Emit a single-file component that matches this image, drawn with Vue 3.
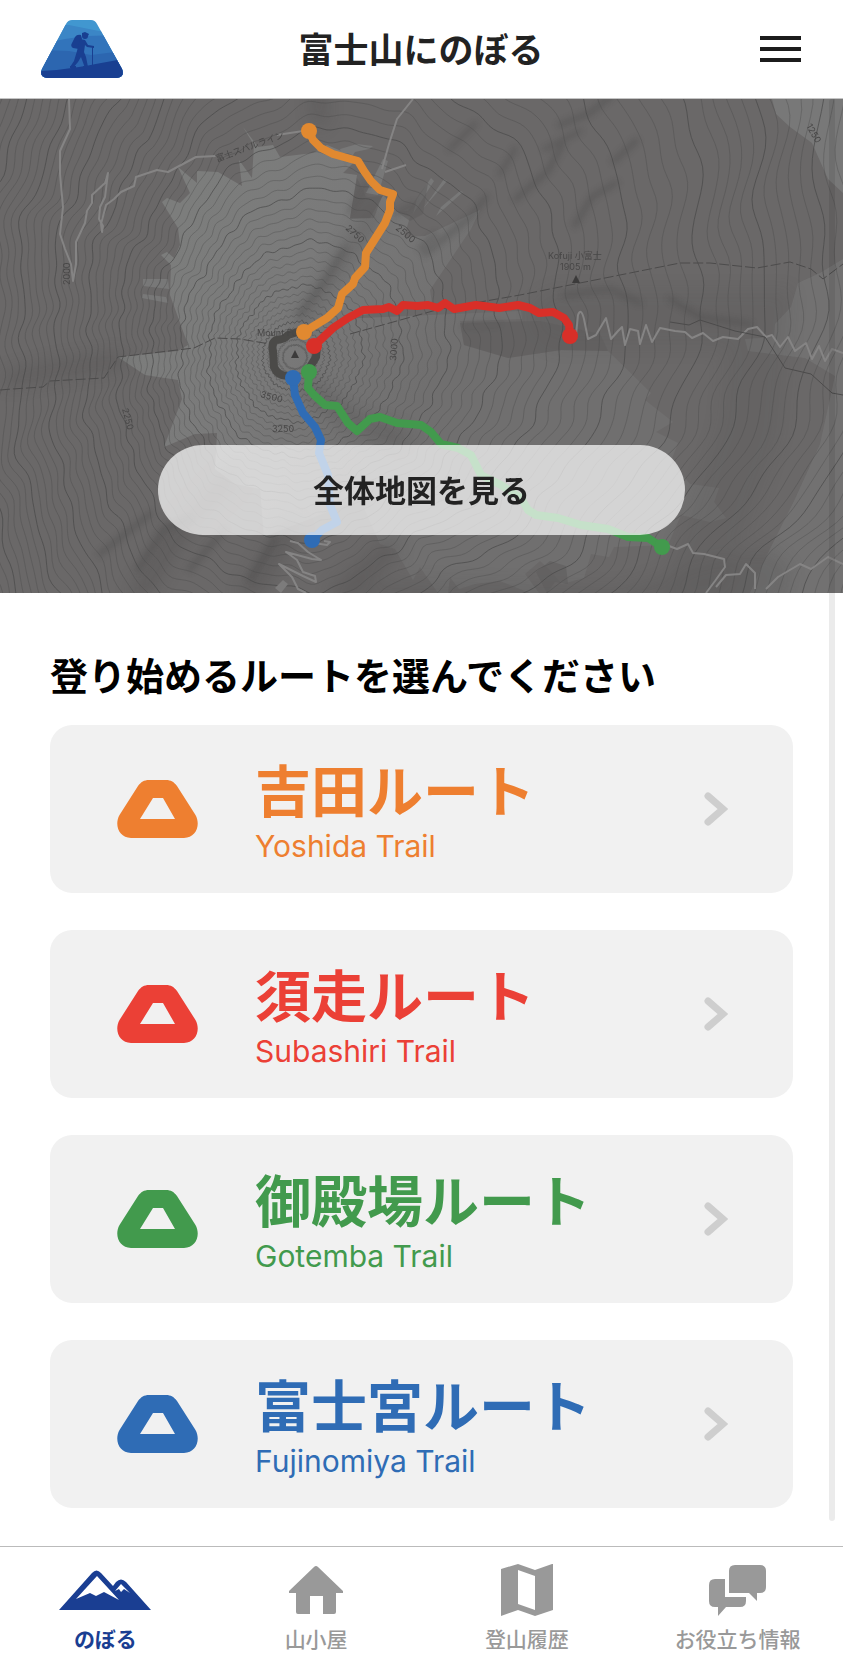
<script setup>
import { ref } from 'vue'

const routes = [
  { id: 'yoshida', name: '吉田ルート', trail: 'Yoshida Trail' },
  { id: 'subashiri', name: '須走ルート', trail: 'Subashiri Trail' },
  { id: 'gotemba', name: '御殿場ルート', trail: 'Gotemba Trail' },
  { id: 'fujinomiya', name: '富士宮ルート', trail: 'Fujinomiya Trail' },
]

const tabs = [
  { id: 'climb', label: 'のぼる' },
  { id: 'hut', label: '山小屋' },
  { id: 'history', label: '登山履歴' },
  { id: 'info', label: 'お役立ち情報' },
]

const activeTab = ref('climb')

const trails = [
  {
    id: 'yoshida',
    points: '309,32 313,41 321,49 333,55 358,62 364,72 371,82 380,91 393,95 390,103 390,111 385,124 373,143 366,154 365,168 355,179 353,185 342,195 338,209 327,219 304,233',
    ends: [[309, 32], [304, 233]],
  },
  {
    id: 'subashiri',
    points: '314,247 333,229 348,219 363,211 383,210 389,208 397,212 403,206 417,207 428,206 438,209 445,204 454,210 476,206 499,209 518,206 530,209 539,214 553,213 564,219 569,226 570,237',
    ends: [[314, 247], [570, 237]],
  },
  {
    id: 'gotemba',
    points: '309,273 308,289 314,296 325,306 337,307 348,324 357,332 370,320 380,318 397,324 421,326 431,333 441,345 458,349 471,356 481,376 501,386 521,399 528,411 536,416 558,419 581,426 608,430 628,438 648,439 662,448',
    ends: [[309, 273], [662, 448]],
  },
  {
    id: 'fujinomiya',
    points: '293,279 295,296 303,314 315,328 321,341 319,354 328,376 330,406 337,423 322,431 312,441',
    ends: [[293, 279], [312, 441]],
  },
]

// contour rings around the summit: steeper to the west, wider apart to the north-east
function contour(level) {
  const points = []
  const grow = Math.min(level, 40)
  for (let step = 0; step < 360; step++) {
    const a = (step / 360) * Math.PI * 2
    const east = Math.max(0, Math.cos(a + 0.6))
    const base = 12 + level * 5 + level * level * 0.022
    const spread = 1 + east * grow * 0.02 + Math.sin(a) ** 2 * grow * 0.011
    const ridge =
      Math.sin(a * 9 + 1) * 0.014 +
      Math.sin(a * 17 + level * 0.08) * 0.011 +
      Math.sin(a * 31 + level * 0.2) * 0.008
    const rough = Math.sin(a * 47 + level * 0.9) * 0.9
    const r = base * spread * (1 + ridge) + rough
    points.push(`${(295 + r * Math.cos(a)).toFixed(1)},${(258 + r * Math.sin(a)).toFixed(1)}`)
  }
  return points.join(' ')
}

const contours = Array.from({ length: 72 }, (_, i) => ({
  points: contour(i),
  major: i % 5 === 4,
}))
</script>

<template>
  <div class="app">
    <header class="header">
      <a class="logo" href="#" aria-label="ホーム">
        <svg width="82" height="58" viewBox="0 0 82 58" aria-hidden="true">
          <defs>
            <clipPath id="logo-shape">
              <path d="M31 0H50Q54 0 56 4L81 49Q84 57 76 58H6Q-2 57 1 49L25 4Q27 0 31 0Z" />
            </clipPath>
          </defs>
          <g clip-path="url(#logo-shape)">
            <path fill="#4197d0" d="M0 0h82v58H0z" />
            <path fill="#3b86c6" d="M0 4L28 5L58 11L82 8V58H0z" />
            <path fill="#3274bb" d="M0 24L24 19L45 16L82 15V58H0z" />
            <path fill="#2c66b0" d="M0 30L28 31L50 35L82 31V58H0z" />
            <path fill="#193f91" d="M0 51Q20 50 38 47Q55 44 82 39V58H0z" />
          </g>
          <g fill="#193f91">
            <circle cx="44" cy="16" r="3" />
            <path d="M41 13l3-1 4 2-1 2h-6z" />
            <path d="M34 17q2-3 6-2l1 4-3 10-6-1q-3-2-1-5z" />
            <path d="M39 19l5 1 3 5 6 1v2l-7-1-2-2-1 7 2 5 2 10-3 1-4-11-3 5-5 6-3-1 4-6 3-10z" />
            <path d="M29 46h6v2h-6zM42 46h5v2h-5zM51 26h1v20h-1z" />
          </g>
        </svg>
      </a>
      <h1 class="title">富士山にのぼる</h1>
      <button class="menu" type="button" aria-label="メニュー">
        <span></span>
        <span></span>
        <span></span>
      </button>
    </header>

    <main class="content">
      <section class="map">
        <svg class="map-canvas" viewBox="0 0 843 494" preserveAspectRatio="xMidYMid slice" aria-hidden="true">
          <defs>
            <linearGradient id="slope" gradientUnits="userSpaceOnUse" x1="180" y1="120" x2="440" y2="260">
              <stop offset="0" stop-color="#7c7d7c" />
              <stop offset="0.45" stop-color="#7a7a7a" />
              <stop offset="1" stop-color="#706f6f" />
            </linearGradient>
            <filter id="shade" x="-20%" y="-20%" width="140%" height="140%">
              <feGaussianBlur stdDeviation="9" />
            </filter>
            <filter id="shade-fine" x="-20%" y="-20%" width="140%" height="140%">
              <feGaussianBlur stdDeviation="3" />
            </filter>
          </defs>
          <rect width="843" height="494" fill="#6a6868" />

          <!-- bare slopes -->
          <path
            fill="url(#slope)"
            d="M188 246L170 196L171 166L161 156L167 153L174 159L180 146L178 129L162 103L167 99L180 104L190 94L178 68L197 84V72L218 73L242 87L239 61L252 79L254 46L243 28L258 48L273 46L280 58L313 54L327 46L358 59L343 74L357 76L350 119L370 119L384 95L396 112L410 118L404 138L425 137L480 111L471 130L430 191L432 204L340 220L521 212L522 220L460 222L464 246L508 259L561 251L608 252L651 294L645 301L673 323L656 333L678 344L671 362L690 385L719 389L714 403L726 419L710 423L681 416L668 446L614 448L609 458L591 455L584 479L562 485L549 470L540 462L525 475L539 494H530L500 482L475 485L459 490L450 478L448 494H438L420 468L413 481L395 450L380 445L360 400L264 438L260 390L235 385L215 370L217 334L195 335L164 348L182 300L178 281L145 276L118 258L178 252Z"
          />
          <g fill="#787878">
            <path d="M772 0H843V94L828 80L812 44L790 28L776 15Z" />
            <path d="M843 160L820 174L798 184L791 208L775 225L774 238L745 240L748 252L805 259L835 277L820 345L795 400L765 460L750 494H843Z" opacity="0.6" />
            <path d="M143 180H168L169 190L143 187ZM143 195L166 198L168 204L142 199Z" />
            <path d="M340 50L357 45L373 47L369 50L355 53L345 68ZM366 94L383 60L388 62L378 96ZM413 115L434 82L431 79L417 100ZM421 112L447 82L444 80L430 100ZM436 117L463 93L460 92L441 108Z" />
          </g>

          <!-- hillshade -->
          <g filter="url(#shade)" stroke="#444343" fill="none" stroke-linecap="round" opacity="0.3">
            <path stroke-width="14" d="M300 225L340 165L375 115M320 20L318 -10" />
            <path stroke-width="18" d="M310 290L350 320L400 340M140 494L180 430L230 380M250 494L290 430M340 494L390 450" />
            <path stroke-width="14" d="M10 280L60 270L120 262" />
            <path stroke-width="60" d="M360 510L620 520L760 480" opacity="0.6" />
            <path stroke-width="60" d="M560 220L760 220L750 330L700 470" opacity="0.4" />
          </g>
          <g filter="url(#shade-fine)" stroke="#403f3f" fill="none" stroke-linecap="round" opacity="0.3">
            <path stroke-width="6" d="M560 26L590 14L612 -4M614 62L636 42M516 100L548 72L562 46M575 126L592 98L616 84M425 155L470 118L486 98M300 215L325 182L345 150M138 470L164 430L190 420M190 470L225 430M250 480L275 440M100 455L150 415" />
            <path stroke-width="5" d="M565 196L610 190L640 204M670 200L700 218L750 225M450 50L475 25M545 50L580 32M500 75L515 50M350 112L366 85M395 115L415 105M465 228L500 226M420 150L435 135" />
          </g>
          <path
            fill="#5f5d5d"
            opacity="0.6"
            d="M357 79L366 98L382 97L374 119L350 120ZM396 112L408 112L420 94L428 84L423 115L410 122ZM460 224L540 222L600 235L608 252L561 251L508 259L464 246ZM536 473L550 462L566 467L568 485L555 483L547 494Z"
          />

          <g fill="none" stroke="#494848">
            <polygon
              v-for="(line, i) in contours"
              :key="i"
              :points="line.points"
              :class="line.major ? 'contour-major' : 'contour-minor'"
            />
          </g>

          <!-- roads -->
          <g class="road">
            <path d="M69 0L70 30L60 52L60 75L63 108L60 135L65 150L71 165L73 182L76 165L76 143L85 124L87 112L92 104L92 96L105 84L108 74L105 98L100 108L99 120L103 127L102 133L101 125L106 106L114 100L121 93L134 87L136 78L157 71L168 73L196 58L216 57M277 36L303 32" />
            <path d="M576 236L578 216Q581 208 584 220L588 240L596 236L606 219L611 240L618 232L622 228L625 246L630 230L638 232L640 245L646 226L652 243L660 229L675 232L685 233L692 239L703 234L713 242L723 238L738 240L748 230L757 228L766 238L772 236L780 248L788 238L795 252L806 244L812 260L819 247L825 262L832 250L843 254" />
            <path d="M669 447L677 450L688 445L693 454L704 455L724 460L725 468L715 482L706 494M716 488L726 476L740 475L746 465L755 474V490M766 490L778 478L800 465L811 470L828 458L843 465" />
            <path d="M413 0L397 20L389 45L382 70M385 73L406 66" />
            <path d="M324 442L330 443L327 446L314 444M290 442L298 444L308 453L321 461L312 460L286 453L297 461L303 473L315 477L316 483L303 477L279 465L292 478L298 490L306 494" />
          </g>
          <path fill="#7c7b7b" d="M283 481L288 485L281 494L275 489Z" />
          <path class="boundary" d="M0 291L12 290L43 288L50 282L104 279L118 258L194 249L215 239L240 240L270 245" />
          <path class="boundary" d="M350 235L440 210L520 196L610 178L680 164L710 164L757 169L790 163L811 170L823 180L843 165" />
          <path class="border-line" d="M670 223L689 226L700 221L735 232L765 238L785 269L811 275L832 294L843 296" />

          <!-- crater rim -->
          <path class="crater" d="M304 231L288 236Q284 241 276 241Q271 244 273 252L274 268Q278 278 290 277M317 248L316 258L310 268" />
          <path class="peak" d="M295 251L299 259H291ZM576 176L580 184H572Z" />
          <g class="map-label">
            <text x="257" y="237">Mount Fuji</text>
            <text transform="translate(217 63) rotate(-20)">富士スバルライン</text>
            <text x="548" y="160">Kofuji 小富士</text>
            <text x="560" y="171">1905 m</text>
            <text transform="translate(345 130) rotate(42)">2750</text>
            <text transform="translate(395 130) rotate(40)">2500</text>
            <text transform="translate(806 27) rotate(60)">1250</text>
            <text transform="translate(122 310) rotate(75)">2250</text>
            <text x="272" y="333">3250</text>
            <text transform="translate(260 298) rotate(15)">3500</text>
            <text transform="translate(70 186) rotate(-90)">2000</text>
            <text transform="translate(396 262) rotate(-85)">3000</text>
          </g>

          <g v-for="trail in trails" :key="trail.id" class="trail" :class="trail.id">
            <polyline :points="trail.points" />
            <circle v-for="(end, i) in trail.ends" :key="i" :cx="end[0]" :cy="end[1]" r="8" />
          </g>
        </svg>
        <button class="map-button" type="button">全体地図を見る</button>
      </section>

      <section class="routes">
        <h2 class="routes-heading">登り始めるルートを選んでください</h2>
        <ul class="route-list">
          <li v-for="route in routes" :key="route.id">
            <a class="route-card" :class="route.id" :href="`#${route.id}`">
              <svg class="route-icon" width="81" height="58" viewBox="0 0 81 58" aria-hidden="true">
                <path
                  fill="currentColor"
                  fill-rule="evenodd"
                  d="M32 0H49C54 0 57 2 60 6L78.500 35C84 45 79 58 67 58H14C2 58 -3 45 2.500 35L21 6C24 2 27 0 32 0ZM36 18L23 39H58L46 18Z"
                />
              </svg>
              <span class="route-text">
                <span class="route-name">{{ route.name }}</span>
                <span class="route-trail">{{ route.trail }}</span>
              </span>
              <svg class="chevron" width="24" height="34" viewBox="0 0 24 34" aria-hidden="true">
                <path d="M4 4L19 17L4 30" />
              </svg>
            </a>
          </li>
        </ul>
      </section>
      <div class="scrollbar"></div>
    </main>

    <nav class="tabs">
      <button
        v-for="tab in tabs"
        :key="tab.id"
        class="tab"
        :class="{ active: activeTab === tab.id }"
        type="button"
        @click="activeTab = tab.id"
      >
        <span class="tab-icon">
          <svg v-if="tab.id === 'climb'" width="92" height="40" viewBox="0 0 92 40">
            <path fill="currentColor" d="M0 40L33 3Q37.500 -2 42 3L54 16L57 12Q62 7 67 12L92 40Z" />
            <path fill="#fff" d="M38 6L60 30L45 22L37 26L31 23L17 29ZM62 14L56 21L60 19L62 22L65 19L71 23Z" />
          </svg>
          <svg v-else-if="tab.id === 'hut'" width="54" height="48" viewBox="0 0 54 48">
            <path fill="currentColor" d="M25 1Q27 -1 29 1L54 25V27H47V46Q47 48 45 48H34V30H21V48H9Q7 48 7 46V27H0V25Z" />
          </svg>
          <svg v-else-if="tab.id === 'history'" width="52" height="52" viewBox="0 0 52 52">
            <path fill="currentColor" fill-rule="evenodd" d="M0 5L17 0L34 6L51 0H52V46L34 52L17 46L0 52ZM17 6V40L34 46V12Z" />
          </svg>
          <svg v-else width="57" height="51" viewBox="0 0 57 51">
            <path fill="currentColor" d="M26 0H51Q57 0 57 6V22Q57 28 51 28H48V36L40 28H20V6Q20 0 26 0Z" />
            <path fill="currentColor" d="M6 14H16V32H37V36Q37 42 31 42H17L9 51V42H6Q0 42 0 36V20Q0 14 6 14Z" />
          </svg>
        </span>
        <span class="tab-label">{{ tab.label }}</span>
      </button>
    </nav>
  </div>
</template>

<style>
body {
  margin: 0;
  background: #fff;
}
</style>

<style scoped>
.app {
  display: flex;
  flex-direction: column;
  min-height: 100vh;
  color: #222;
  font-family: Inter, "Noto Sans CJK JP", sans-serif;
}

button {
  padding: 0;
  border: 0;
  background: none;
  color: inherit;
  font: inherit;
  cursor: pointer;
}

.header {
  display: grid;
  grid-template-columns: 84px 1fr 84px;
  align-items: center;
  box-sizing: border-box;
  height: 99px;
  padding: 0 42px 0 41px;
  border-bottom: 1px solid #c4c4c4;
}

.logo svg {
  display: block;
}

.title {
  margin: 0;
  padding-top: 2px;
  font-size: 35px;
  font-weight: 600;
  line-height: 48px;
  text-align: center;
}

.menu {
  display: flex;
  flex-direction: column;
  gap: 7px;
  justify-self: end;
}

.menu span {
  width: 41px;
  height: 4px;
  background: #1c1c1c;
}

.content {
  position: relative;
  flex: 1;
}

.map {
  position: relative;
}

.map-canvas {
  display: block;
  width: 100%;
  height: auto;
}

.contour-minor {
  stroke-width: 1;
  opacity: 0.36;
}

.contour-major {
  stroke-width: 1;
  opacity: 0.7;
}

.road {
  fill: none;
  stroke: #858484;
  stroke-width: 2;
  stroke-linejoin: round;
}

.boundary {
  fill: none;
  stroke: #4c4b4b;
  stroke-width: 1;
  stroke-dasharray: 10 3;
}

.border-line {
  fill: none;
  stroke: #4c4b4b;
  stroke-width: 1;
}

.crater {
  fill: none;
  stroke: #4b4a48;
  stroke-width: 8;
  stroke-linejoin: round;
}

.peak {
  fill: #3c3b3b;
}

.map-label {
  fill: #484747;
  font-size: 9px;
}

.trail polyline {
  fill: none;
  stroke: currentColor;
  stroke-width: 8;
  stroke-linejoin: round;
  stroke-linecap: round;
}

.trail circle {
  fill: currentColor;
}

.trail.yoshida {
  color: #e18930;
}

.trail.subashiri {
  color: #d92f28;
}

.trail.gotemba {
  color: #429a4d;
}

.trail.fujinomiya {
  color: #2f6cb5;
}

.map-button {
  position: absolute;
  right: 0;
  bottom: 58px;
  left: 0;
  width: 62.500%;
  height: 90px;
  margin: 0 auto;
  padding-bottom: 3px;
  border-radius: 45px;
  background: rgba(255, 255, 255, 0.7);
  color: #222;
  font-size: 31px;
  font-weight: 600;
}

.routes {
  padding: 58px 50px 38px;
}

.routes-heading {
  margin: 0 0 24px;
  color: #000;
  font-size: 38px;
  font-weight: 600;
  line-height: 50px;
}

.route-list {
  display: flex;
  flex-direction: column;
  gap: 37px;
  margin: 0;
  padding: 0;
  list-style: none;
}

.route-card {
  display: flex;
  align-items: center;
  box-sizing: border-box;
  height: 168px;
  padding: 0 65px 0 67px;
  border-radius: 22px;
  background: #f1f1f1;
  text-decoration: none;
}

.route-card.yoshida {
  color: #ee7f30;
}

.route-card.subashiri {
  color: #eb4036;
}

.route-card.gotemba {
  color: #429a4d;
}

.route-card.fujinomiya {
  color: #2f6cb5;
}

.route-text {
  display: flex;
  flex: 1;
  flex-direction: column;
  margin-left: 57px;
  padding-top: 5px;
}

.route-name {
  font-size: 56px;
  font-weight: 600;
  line-height: 68px;
}

.route-trail {
  font-size: 30px;
  line-height: 40px;
}

.chevron path {
  fill: none;
  stroke: #cecece;
  stroke-width: 7;
  stroke-linecap: round;
}

.scrollbar {
  position: absolute;
  top: 0;
  right: 8px;
  bottom: 25px;
  width: 6px;
  border-radius: 3px;
  background: rgba(0, 0, 0, 0.08);
}

.tabs {
  display: grid;
  grid-template-columns: repeat(4, 1fr);
  box-sizing: border-box;
  height: 112px;
  padding-top: 16px;
  border-top: 1px solid #bbb;
}

.tab {
  display: flex;
  flex-direction: column;
  align-items: center;
  color: #999;
}

.tab.active {
  color: #1a3e92;
}

.tab-icon {
  display: flex;
  align-items: center;
  height: 54px;
}

.tab-label {
  margin-top: 8px;
  font-size: 21px;
  font-weight: 500;
  line-height: 30px;
}

.active .tab-label {
  font-weight: 700;
}
</style>
